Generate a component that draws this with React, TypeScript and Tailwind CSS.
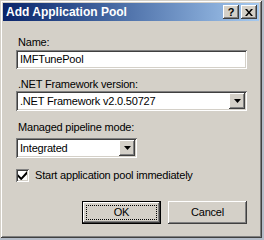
import React from 'react'

const raised =
  'shadow-[inset_-1px_-1px_#404040,inset_1px_1px_#ffffff,inset_-2px_-2px_#808080,inset_2px_2px_#d4d0c8]'
const sunken =
  'shadow-[inset_1px_1px_#808080,inset_-1px_-1px_#ffffff,inset_2px_2px_#404040,inset_-2px_-2px_#d4d0c8]'

function DropArrow() {
  return (
    <div className={`w-[16px] h-[16px] bg-[#d4d0c8] flex items-center justify-center ${raised}`}>
      <svg width="7" height="4" viewBox="0 0 7 4">
        <path d="M0 0h7L3.5 4z" fill="#000" />
      </svg>
    </div>
  )
}

function Combo({ value, width }: { value: string; width: string }) {
  return (
    <div className={`${width} h-[20px] bg-white flex items-center justify-between pl-[4px] pr-[2px] ${sunken}`}>
      <span className="text-[11px] leading-[13px] text-black">{value}</span>
      <DropArrow />
    </div>
  )
}

function CaptionButton({ children }: { children: React.ReactNode }) {
  return (
    <div className={`w-[16px] h-[14px] bg-[#d4d0c8] flex items-center justify-center text-[11px] font-bold leading-none text-black tracking-normal ${raised}`}>
      {children}
    </div>
  )
}

export default function App() {
  return (
    <div className="w-[264px] h-[240px] bg-[#b4bcc8] font-['Liberation_Sans',Arial,sans-serif] tracking-[-0.2px]">
      <div className="w-[262px] h-[238px] bg-[#d4d0c8] p-[3px] flex flex-col shadow-[inset_1px_1px_#d4d0c8,inset_-1px_-1px_#404040,inset_2px_2px_#ffffff,inset_-2px_-2px_#808080]">
        {/* title bar */}
        <div className="h-[18px] flex items-center justify-between pl-[3px] pr-[2px] bg-gradient-to-r from-[#0a246a] to-[#a6caf0]">
          <span className="text-[12px] font-bold text-white leading-[14px] tracking-normal">Add Application Pool</span>
          <div className="flex gap-[2px]">
            <CaptionButton>?</CaptionButton>
            <CaptionButton>
              <svg width="8" height="7" viewBox="0 0 8 7">
                <path d="M0 0h2l2 2.5L6 0h2L5 3.5 8 7H6L4 4.5 2 7H0l3-3.5z" fill="#000" />
              </svg>
            </CaptionButton>
          </div>
        </div>

        {/* body */}
        <div className="flex flex-col pl-[13px] pt-[15px] text-[11px] leading-[13px] text-black">
          <span className="ml-[2px]">Name:</span>
          <div className={`mt-[1px] w-[231px] h-[19px] bg-white flex items-center pl-[4px] ${sunken}`}>
            IMFTunePool
          </div>

          <span className="ml-[2px] mt-[9px]">.NET Framework version:</span>
          <Combo value=".NET Framework v2.0.50727" width="w-[231px]" />

          <span className="ml-[2px] mt-[10px]">Managed pipeline mode:</span>
          <div className="mt-[4px]">
            <Combo value="Integrated" width="w-[121px]" />
          </div>

          <div className="mt-[11px] flex items-center gap-[6px]">
            <div className={`w-[13px] h-[13px] bg-white flex items-center justify-center ${sunken}`}>
              <svg width="9" height="9" viewBox="0 0 7 7">
                <path d="M0 2.5l2.5 2.5L7 0v2.5L2.5 7.2 0 4.7z" fill="#000" />
              </svg>
            </div>
            <span>Start application pool immediately</span>
          </div>

          <div className="mt-[19px] w-[231px] flex justify-end gap-[7px]">
            <div className="w-[79px] h-[23px] border border-black">
              <div className={`w-full h-full flex items-center justify-center p-[3px] ${raised}`}>
                <div className="w-full h-full flex items-center justify-center border border-dotted border-black">
                  OK
                </div>
              </div>
            </div>
            <div className={`w-[79px] h-[23px] flex items-center justify-center ${raised}`}>
              Cancel
            </div>
          </div>
        </div>
      </div>
    </div>
  )
}
